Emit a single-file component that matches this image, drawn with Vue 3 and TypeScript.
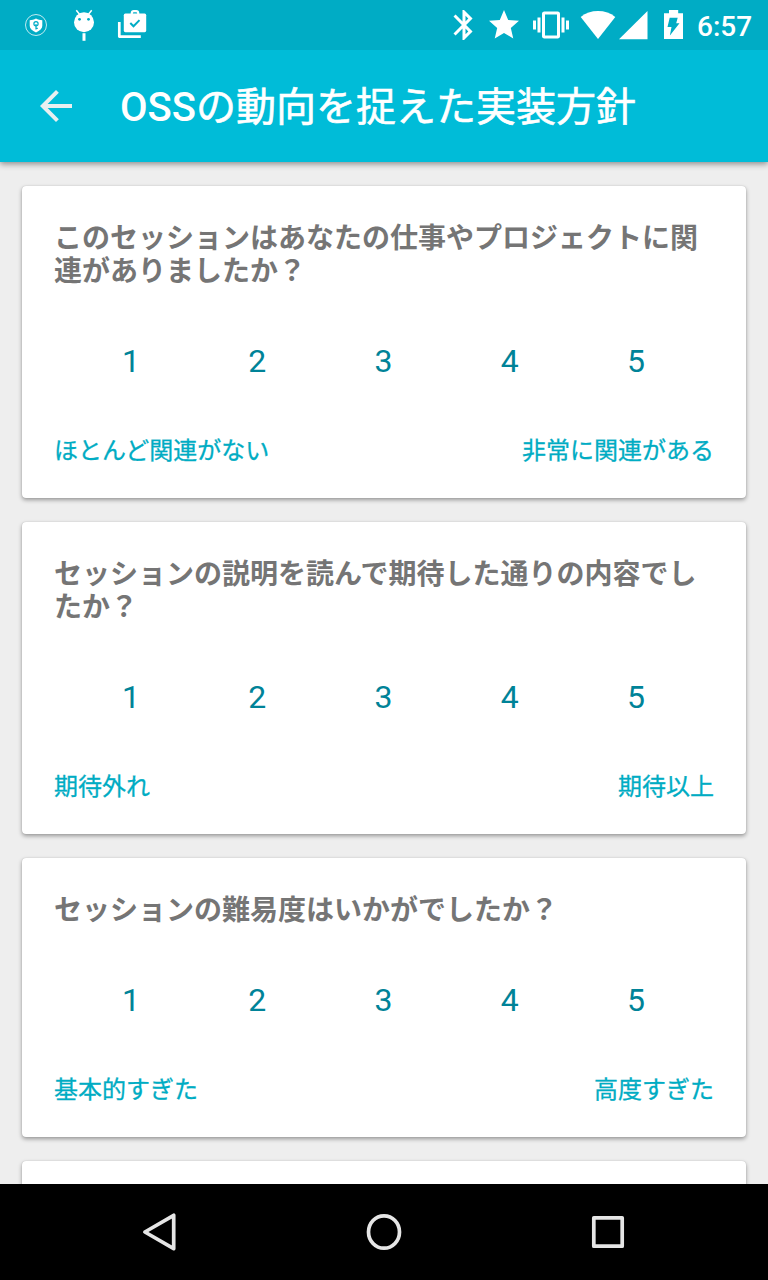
<script setup lang="ts">
interface Question {
  title: string
  low: string
  high: string
}

const scores: number[] = [1, 2, 3, 4, 5]

const questions: Question[] = [
  {
    title: 'このセッションはあなたの仕事やプロジェクトに関連がありましたか？',
    low: 'ほとんど関連がない',
    high: '非常に関連がある',
  },
  {
    title: 'セッションの説明を読んで期待した通りの内容でしたか？',
    low: '期待外れ',
    high: '期待以上',
  },
  {
    title: 'セッションの難易度はいかがでしたか？',
    low: '基本的すぎた',
    high: '高度すぎた',
  },
]
</script>

<template>
  <div class="screen">
    <header class="status">
      <div class="group left">
        <svg width="24" height="30" viewBox="24 10 24 30">
          <circle cx="36" cy="25" r="10.5" fill="none" stroke="#fff" stroke-opacity=".75" />
          <path d="M36 18.6c2 1.2 4 1.6 6.3 1.7v5.4c0 3-2.4 5-6.3 6.7-3.9-1.7-6.3-3.7-6.3-6.7v-5.4c2.3-.1 4.3-.5 6.3-1.7z" fill="#fff" />
          <circle cx="36" cy="23.7" r="2.1" fill="none" stroke="#00acc5" stroke-width="1.2" />
          <path d="M36 24v5.5M36 28.3h1.8" stroke="#00acc5" stroke-width="1.2" />
        </svg>
        <svg class="droid" width="24" height="34" viewBox="72 8 24 34">
          <path d="M76.3 10.3l3.2 3.9M91.7 10.3l-3.2 3.9" stroke="#fff" stroke-width="1.5" />
          <circle cx="84" cy="22.2" r="10" fill="#fff" />
          <circle cx="79.5" cy="19.3" r="1.4" fill="#00acc5" />
          <circle cx="88.5" cy="19.3" r="1.4" fill="#00acc5" />
          <path d="M84 33.2v7.6" stroke="#fff" stroke-width="3" />
        </svg>
        <svg class="case" width="32" height="32" viewBox="116 8 32 32">
          <path d="M119.3 22v14.6h21.5" fill="none" stroke="#fff" stroke-width="2.7" stroke-linejoin="round" />
          <path d="M131.8 14.5v-1.4q0-2 2-2h2.4q2 0 2 2v1.4" fill="none" stroke="#fff" stroke-width="2.2" />
          <rect x="123.8" y="13.6" width="22.4" height="18.6" rx="1.6" fill="#fff" />
          <path d="M130.3 23l3.2 3.3 6-6.2" fill="none" stroke="#00acc5" stroke-width="2" />
        </svg>
      </div>
      <div class="group right">
        <svg width="36" height="36" viewBox="0 0 24 24" fill="#fff">
          <path d="M17.71 7.71L12 2h-1v7.59L6.41 5 5 6.41 10.59 12 5 17.59 6.41 19 11 14.41V22h1l5.71-5.71-4.3-4.29 4.3-4.29zM13 5.83l1.88 1.88L13 9.59V5.83zm1.88 10.46L13 18.17v-3.76l1.88 1.88z" />
        </svg>
        <svg class="star" width="36" height="36" viewBox="0 0 24 24" fill="#fff">
          <path d="M12 17.27L18.18 21l-1.64-7.03L22 9.24l-7.19-.61L12 2 9.19 8.63 2 9.24l5.46 4.73L5.82 21z" />
        </svg>
        <svg class="vibrate" width="36" height="36" viewBox="0 0 24 24" fill="#fff">
          <path d="M0 15h2V9H0v6zm3 2h2V7H3v10zm19-8v6h2V9h-2zm-3 8h2V7h-2v10zM16.5 3h-9C6.67 3 6 3.67 6 4.5v15c0 .83.67 1.5 1.5 1.5h9c.83 0 1.5-.67 1.5-1.5v-15c0-.83-.67-1.5-1.5-1.5zM16 19H8V5h8v14z" />
        </svg>
        <svg class="wifi" width="36" height="30" viewBox="580 10 36 30" fill="#fff">
          <path d="M598 39L580.7 16.9C585.5 13 591.5 11 598 11s12.5 2 17.3 5.9z" />
        </svg>
        <svg class="signal" width="30" height="30" viewBox="619 10 30 30" fill="#fff">
          <path d="M619 39.3L647.5 11v28.3z" />
        </svg>
        <svg class="battery" width="20" height="30" viewBox="664 10 20 30">
          <path d="M669 10h9.2v3.200h4.800V39h-19V13.200h5z" fill="#fff" />
          <path d="M669.7 17.700h8l-1.500 5.500h3.300l-9.600 12.400 1.600-8.600h-4z" fill="#00acc5" />
        </svg>
        <span class="clock">6:57</span>
      </div>
    </header>

    <div class="appbar">
      <svg width="48" height="48" viewBox="0 0 24 24" fill="#e9eff0">
        <path d="M20 11H7.83l5.59-5.59L12 4l-8 8 8 8 1.41-1.41L7.83 13H20v-2z" />
      </svg>
      <h1>OSS<span>の動向を捉えた実装方針</span></h1>
    </div>

    <main>
      <section v-for="q in questions" :key="q.title" class="card">
        <h2>{{ q.title }}</h2>
        <div class="scores">
          <span v-for="n in scores" :key="n">{{ n }}</span>
        </div>
        <div class="ends">
          <span>{{ q.low }}</span>
          <span>{{ q.high }}</span>
        </div>
      </section>
      <section class="card upcoming"></section>
    </main>

    <nav>
      <svg width="48" height="48" viewBox="0 0 48 48">
        <path d="M38.200 7.300v33.400L9.400 24z" transform="translate(-.5 0)" class="back" />
      </svg>
      <svg width="48" height="48" viewBox="0 0 48 48">
        <ellipse cx="24" cy="24" rx="15.500" ry="16.200" />
      </svg>
      <svg width="48" height="48" viewBox="0 0 48 48">
        <rect x="9.800" y="9.800" width="28.400" height="28.400" />
      </svg>
    </nav>
  </div>
</template>

<style>
body {
  margin: 0;
}
</style>

<style scoped>
.screen {
  width: 768px;
  height: 1280px;
  display: flex;
  flex-direction: column;
  overflow: hidden;
  background: #eee;
  font-family: Roboto, "Noto Sans CJK JP", sans-serif;
}
svg {
  display: block;
  flex: none;
}
.status {
  position: relative;
  z-index: 2;
  height: 50px;
  flex: none;
  display: flex;
  justify-content: space-between;
  background: #00acc5;
  padding: 0 17px 0 24px;
}
.group {
  display: flex;
  align-items: center;
}
.droid {
  margin-left: 24px;
}
.case {
  margin-left: 20px;
  margin-bottom: 2px;
}
.star {
  margin-left: 4px;
}
.vibrate {
  margin-left: 11px;
}
.wifi {
  margin-left: 11px;
}
.signal {
  margin-left: 3px;
}
.battery {
  margin-left: 15px;
}
.clock {
  width: 55px;
  margin-left: 13px;
  margin-right: -1px;
  color: #fff;
  font-size: 28px;
  font-weight: 500;
  line-height: 48px;
  padding-top: 4px;
}
.appbar {
  position: relative;
  z-index: 1;
  height: 112px;
  flex: none;
  display: flex;
  align-items: center;
  padding-left: 32px;
  background: #00bcd8;
  box-shadow: 0 2px 6px rgba(0, 0, 0, 0.42);
}
h1 {
  margin: 0 0 0 40px;
  padding-top: 4px;
  color: #fff;
  font-size: 40px;
  font-weight: 500;
  line-height: 48px;
  white-space: nowrap;
}
h1 span {
  font-weight: 400;
  -webkit-text-stroke: 0.6px #fff;
}
main {
  flex: 1;
  min-height: 0;
  overflow: hidden;
  display: flex;
  flex-direction: column;
  gap: 24px;
  padding: 24px 22px 0;
}
.card {
  flex: none;
  box-sizing: border-box;
  padding: 36px 32px 30px;
  border-radius: 4px;
  background: #fff;
  box-shadow: 0 2px 4px rgba(0, 0, 0, 0.36), 0 0 1px rgba(0, 0, 0, 0.22);
}
.upcoming {
  height: 120px;
}
h2 {
  margin: 0;
  color: #757575;
  font-size: 28px;
  font-weight: 700;
  line-height: 33px;
}
.scores {
  display: grid;
  grid-template-columns: repeat(5, 1fr);
  margin: 24px 15px 0 14px;
  height: 96px;
  line-height: 98px;
  font-size: 32px;
  text-align: center;
  color: #008398;
}
.ends {
  display: flex;
  justify-content: space-between;
  margin-top: 26px;
  height: 34px;
  line-height: 34px;
  font-size: 24px;
  color: #00acc3;
  -webkit-text-stroke: 0.3px #00acc3;
}
nav {
  height: 96px;
  flex: none;
  display: flex;
  justify-content: center;
  align-items: center;
  gap: 176px;
  background: #000;
}
nav svg {
  fill: none;
  stroke: #e6e6e6;
  stroke-width: 3.7;
  stroke-linejoin: round;
}
</style>
